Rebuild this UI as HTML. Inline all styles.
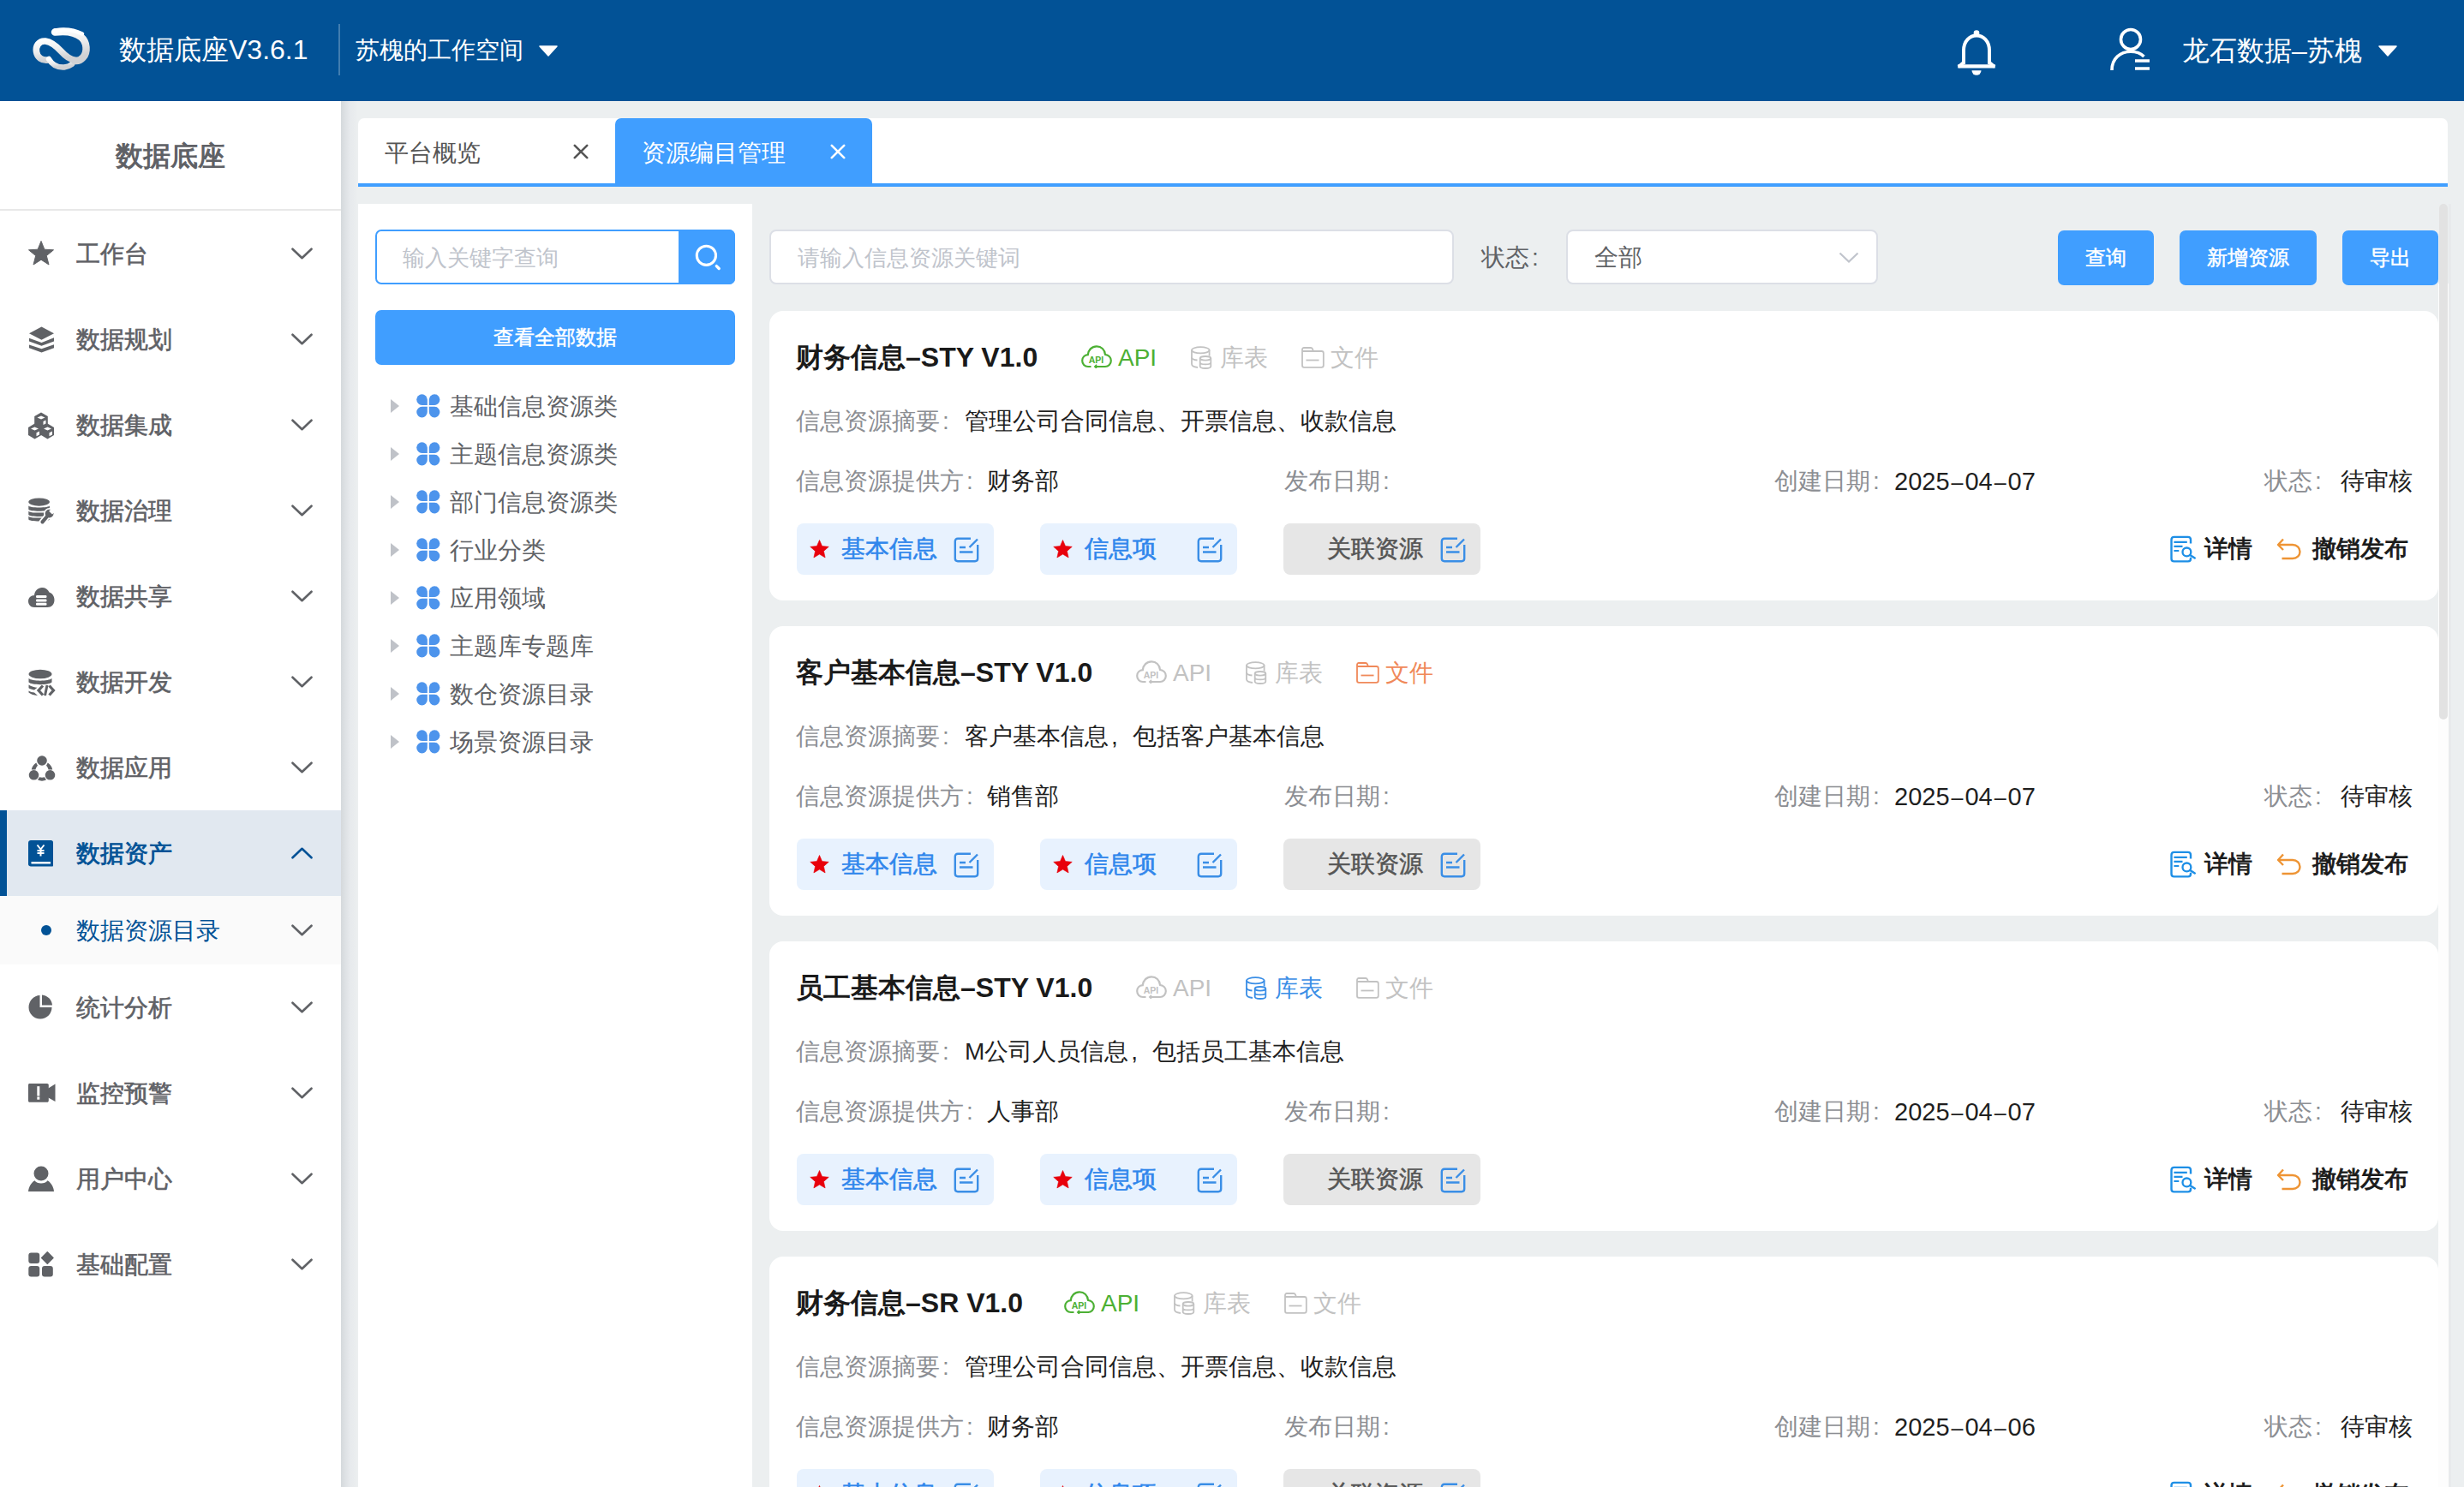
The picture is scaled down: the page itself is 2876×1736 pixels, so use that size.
<!DOCTYPE html>
<html><head><meta charset="utf-8"><style>
html,body{margin:0;padding:0;}
body{width:2876px;height:1736px;overflow:hidden;position:relative;background:#eceff0;font-family:"Liberation Sans", sans-serif;}
.ab{position:absolute;}
.t{position:absolute;white-space:nowrap;}
#hdr{position:absolute;left:0;top:0;width:2876px;height:118px;background:#025296;}
#side{position:absolute;left:0;top:118px;width:398px;height:1618px;background:#fff;}
</style></head><body>
<div id="hdr"></div><svg class="ab" style="left:30px;top:25px" width="85" height="65" viewBox="0 0 85 65">
<defs><linearGradient id="lg" x1="0" y1="0" x2="0.3" y2="1"><stop offset="0" stop-color="#ffffff"/><stop offset="0.55" stop-color="#ececed"/><stop offset="1" stop-color="#d0d1d4"/></linearGradient></defs>
<path d="M58 45.5 C50 44 46 40 42 35.5 C37 30 31 24 23 23 C15 22.5 11.5 29 12.5 35.5 C13.5 42 19 46 26 45" fill="none" stroke="url(#lg)" stroke-width="7.6" stroke-linecap="round"/>
<path d="M27 44 C31 51 37 54 45 53.5 C49 53 52 51.5 54 50" fill="none" stroke="url(#lg)" stroke-width="6.5" stroke-linecap="round"/>
<path d="M34 12.5 C46 11 58 12.5 65 18.5 C71.5 24 72.5 36 67 42 C64 45.5 61 46.5 57 46" fill="none" stroke="url(#lg)" stroke-width="8.5" stroke-linecap="round"/>
<path d="M34 10.5 C44 8.5 56 9.5 66 14.5" fill="none" stroke="#ffffff" stroke-width="4.5" stroke-linecap="round"/>
</svg><div class="t" style="left:139px;top:26.0px;height:64px;line-height:64px;font-size:32px;color:#fff;font-weight:normal;">数据底座V3.6.1</div><div class="ab" style="left:395px;top:28px;width:2px;height:60px;background:rgba(255,255,255,0.25)"></div><div class="t" style="left:415px;top:31.0px;height:56px;line-height:56px;font-size:28px;color:#fff;font-weight:normal;">苏槐的工作空间</div><svg class="ab" style="left:629px;top:53px" width="22" height="13" viewBox="0 0 22 13"><path d="M1 1 H21 L11 12 Z" fill="#fff" stroke="#fff" stroke-width="1.5" stroke-linejoin="round"/></svg><svg class="ab" style="left:2283px;top:33px" width="48" height="58" viewBox="0 0 48 58">
<path d="M9 42 V26 C9 15 16 8.5 24 8.5 C32 8.5 39 15 39 26 V42" fill="none" stroke="#fff" stroke-width="4"/>
<path d="M2.2 44.3 H45.8" stroke="#fff" stroke-width="4.2"/>
<path d="M9.5 39.5 L3 45 M38.5 39.5 L45 45" stroke="#fff" stroke-width="4"/>
<circle cx="24" cy="5.6" r="3.3" fill="#fff"/>
<path d="M18.5 49.3 H29.5 A5.5 5.5 0 0 1 18.5 49.3 Z" fill="#fff"/>
</svg><svg class="ab" style="left:2460px;top:31px" width="54" height="54" viewBox="0 0 54 54">
<circle cx="27" cy="15" r="11.5" fill="none" stroke="#fff" stroke-width="3.6"/>
<path d="M5 51 C5 37 15 29.3 27 29.3 C34 29.3 39 31.5 42.5 35" fill="none" stroke="#fff" stroke-width="3.6"/>
<path d="M32 40 H49 M32 49 H49" stroke="#fff" stroke-width="3.6"/>
</svg><div class="t" style="left:2547px;top:27.0px;height:64px;line-height:64px;font-size:32px;color:#fff;font-weight:normal;">龙石数据–苏槐</div><svg class="ab" style="left:2776px;top:53px" width="22" height="13" viewBox="0 0 22 13"><path d="M1 1 H21 L11 12 Z" fill="#fff" stroke="#fff" stroke-width="1.5" stroke-linejoin="round"/></svg><div id="side"></div><div class="ab" style="left:398px;top:118px;width:20px;height:1618px;background:linear-gradient(90deg,#d5d9dc,#e6e9ec 50%,#eceff0)"></div><div class="t" style="left:0;top:152px;width:398px;text-align:center;height:60px;line-height:60px;font-size:32px;color:#5f6166;font-weight:bold">数据底座</div><div class="ab" style="left:0;top:244px;width:398px;height:2px;background:#e8e8e8"></div><svg class="ab" style="left:33px;top:281px" width="32" height="32" viewBox="0 0 32 32"><path d="M15 0.5 L18.9 10.2 L29.5 10.8 L21.3 17.6 L24 28 L15 22.2 L6 28 L8.7 17.6 L0.5 10.8 L11.1 10.2 Z" fill="#606266" stroke="#606266" stroke-width="1" stroke-linejoin="round"/></svg><div class="t" style="left:89px;top:269.0px;height:56px;line-height:56px;font-size:28px;color:#5f6166;font-weight:normal;-webkit-text-stroke:0.6px #5f6166;">工作台</div><svg class="ab" style="left:340px;top:289px" width="25" height="14" viewBox="0 0 25 14"><path d="M1.5 1.7 L12.5 12.2 L23.5 1.7" fill="none" stroke="#606266" stroke-width="2.6" stroke-linecap="round" stroke-linejoin="round"/></svg><svg class="ab" style="left:33px;top:381px" width="32" height="32" viewBox="0 0 32 32"><path d="M15.5 0.5 L30 8.3 L15.5 15.8 L1 8.3 Z" fill="#606266"/><path d="M1 13.8 L15.5 19 L30 13.2 L30 17.6 L15.5 22.8 L1 17.6 Z" fill="#606266"/><path d="M1 21.5 L15.5 26.3 L30 21.3 L30 25.2 L15.5 30.6 L1 25.2 Z" fill="#606266"/></svg><div class="t" style="left:89px;top:369.0px;height:56px;line-height:56px;font-size:28px;color:#5f6166;font-weight:normal;-webkit-text-stroke:0.6px #5f6166;">数据规划</div><svg class="ab" style="left:340px;top:389px" width="25" height="14" viewBox="0 0 25 14"><path d="M1.5 1.7 L12.5 12.2 L23.5 1.7" fill="none" stroke="#606266" stroke-width="2.6" stroke-linecap="round" stroke-linejoin="round"/></svg><svg class="ab" style="left:33px;top:481px" width="32" height="32" viewBox="0 0 32 32"><g fill="#606266"><path d="M15 0.5 L22.8 5 V14.2 L15 18.7 L7.2 14.2 V5 Z"/><path d="M7.5 13.5 L15.3 18 V27 L7.5 31.5 L0 27 V18 Z"/><path d="M22.5 13.5 L30 18 V27 L22.5 31.5 L15 27 V18 Z"/></g><g fill="#fff"><path d="M15 4.5 L19.5 6.5 L15 8.5 L10.5 6.5 Z"/><path d="M20.5 9.5 V13.5 L17.5 15 V11 Z"/><path d="M7.5 17.5 L12 19.5 L7.5 21.5 L3 19.5 Z"/><path d="M13 22.5 V26.5 L9.5 28.3 V24.3 Z"/><path d="M22.5 17.5 L27 19.5 L22.5 21.5 L18 19.5 Z"/><path d="M28 22.5 V26.5 L24.5 28.3 V24.3 Z"/></g></svg><div class="t" style="left:89px;top:469.0px;height:56px;line-height:56px;font-size:28px;color:#5f6166;font-weight:normal;-webkit-text-stroke:0.6px #5f6166;">数据集成</div><svg class="ab" style="left:340px;top:489px" width="25" height="14" viewBox="0 0 25 14"><path d="M1.5 1.7 L12.5 12.2 L23.5 1.7" fill="none" stroke="#606266" stroke-width="2.6" stroke-linecap="round" stroke-linejoin="round"/></svg><svg class="ab" style="left:33px;top:581px" width="32" height="32" viewBox="0 0 32 32"><g fill="#606266"><ellipse cx="12.6" cy="5.1" rx="12.3" ry="4.6"/><path d="M0.3 9.3 C0.3 12.23 24.9 12.23 24.9 9.3 V13.6 C24.9 16.53 0.3 16.53 0.3 13.6 Z"/><path d="M0.3 15.4 C0.3 18.33 24.9 18.33 24.9 15.4 V19.7 C24.9 22.63 0.3 22.63 0.3 19.7 Z"/><path d="M0.3 21.4 C0.3 24.33 24.9 24.33 24.9 21.4 V25.2 C24.9 28.13 0.3 28.13 0.3 25.2 Z"/></g><path d="M16.5 28.3 L24 19.5" stroke="#fff" stroke-width="7.5" stroke-linecap="round"/><circle cx="24.6" cy="18.6" r="6.6" fill="#fff"/><path d="M16.5 28.3 L24 19.5" stroke="#606266" stroke-width="4.2" stroke-linecap="round"/><circle cx="24.6" cy="18.6" r="4.9" fill="#606266"/><path d="M27.6 12.2 L31.5 16.1 L28 19.6 L24.1 15.7 Z" fill="#fff"/></svg><div class="t" style="left:89px;top:569.0px;height:56px;line-height:56px;font-size:28px;color:#5f6166;font-weight:normal;-webkit-text-stroke:0.6px #5f6166;">数据治理</div><svg class="ab" style="left:340px;top:589px" width="25" height="14" viewBox="0 0 25 14"><path d="M1.5 1.7 L12.5 12.2 L23.5 1.7" fill="none" stroke="#606266" stroke-width="2.6" stroke-linecap="round" stroke-linejoin="round"/></svg><svg class="ab" style="left:33px;top:681px" width="32" height="32" viewBox="0 0 32 32"><path d="M7 28 C2.5 28 0 24.5 0 21 C0 17 3 14 7 14 C7.5 8.5 11.5 5 16 5 C20 5 23 7 24.5 10.5 C28 11.5 30.5 15 30.5 19.5 C30.5 24.5 27 28 22.5 28 Z" fill="#606266"/><g fill="#fff"><rect x="9" y="14" width="12.5" height="3" rx="1.2"/><rect x="9" y="18.5" width="12.5" height="3" rx="1.2"/><rect x="9" y="22.8" width="12.5" height="3" rx="1.2"/></g></svg><div class="t" style="left:89px;top:669.0px;height:56px;line-height:56px;font-size:28px;color:#5f6166;font-weight:normal;-webkit-text-stroke:0.6px #5f6166;">数据共享</div><svg class="ab" style="left:340px;top:689px" width="25" height="14" viewBox="0 0 25 14"><path d="M1.5 1.7 L12.5 12.2 L23.5 1.7" fill="none" stroke="#606266" stroke-width="2.6" stroke-linecap="round" stroke-linejoin="round"/></svg><svg class="ab" style="left:33px;top:781px" width="32" height="32" viewBox="0 0 32 32"><g fill="#606266"><ellipse cx="14" cy="6" rx="13.5" ry="5.2"/><path d="M0.5 11 C4 14.5 24 14.5 27.5 11 V15.5 C24 19 4 19 0.5 15.5 Z"/><path d="M0.5 18.5 C3 20.5 8 21.5 10.5 21.8 L7 24.5 C4 24 2 23.2 0.5 22.3 Z"/><path d="M0.5 25.5 C2 26.5 5 27.5 7 27.5 L11 31 C6 30.5 2 29 0.5 27.5 Z"/></g><path d="M17 19.5 L12 25 L17 30.5 M24.5 19.5 L29.5 25 L24.5 30.5" fill="none" stroke="#606266" stroke-width="3.2"/><path d="M22 19 L19.5 31" stroke="#606266" stroke-width="3"/></svg><div class="t" style="left:89px;top:769.0px;height:56px;line-height:56px;font-size:28px;color:#5f6166;font-weight:normal;-webkit-text-stroke:0.6px #5f6166;">数据开发</div><svg class="ab" style="left:340px;top:789px" width="25" height="14" viewBox="0 0 25 14"><path d="M1.5 1.7 L12.5 12.2 L23.5 1.7" fill="none" stroke="#606266" stroke-width="2.6" stroke-linecap="round" stroke-linejoin="round"/></svg><svg class="ab" style="left:33px;top:881px" width="32" height="32" viewBox="0 0 32 32"><g fill="#606266"><circle cx="16" cy="7" r="5.8"/><circle cx="6.5" cy="23.8" r="5.8"/><circle cx="25.5" cy="23.8" r="5.8"/><path d="M9.2 9.5 L11 12.8 C9.5 14.5 8.7 16.2 8.5 17.6 L3.8 17.6 C4.2 14.5 6 11.5 9.2 9.5 Z"/><path d="M22.8 9.5 L21 12.8 C22.5 14.5 23.3 16.2 23.5 17.6 L28.2 17.6 C27.8 14.5 26 11.5 22.8 9.5 Z"/><path d="M11 29.5 L13 26.2 C15 26.8 17 26.8 19 26.2 L21 29.5 C18 31 14 31 11 29.5 Z"/></g></svg><div class="t" style="left:89px;top:869.0px;height:56px;line-height:56px;font-size:28px;color:#5f6166;font-weight:normal;-webkit-text-stroke:0.6px #5f6166;">数据应用</div><svg class="ab" style="left:340px;top:889px" width="25" height="14" viewBox="0 0 25 14"><path d="M1.5 1.7 L12.5 12.2 L23.5 1.7" fill="none" stroke="#606266" stroke-width="2.6" stroke-linecap="round" stroke-linejoin="round"/></svg><div class="ab" style="left:0;top:946px;width:398px;height:100px;background:#e1e8f0"></div><div class="ab" style="left:0;top:946px;width:8px;height:100px;background:#025296"></div><svg class="ab" style="left:33px;top:981px" width="32" height="32" viewBox="0 0 32 32"><path d="M3 0 H26.5 C28 0 29 1 29 2.5 V29.5 C29 30.2 28.5 30.5 28 30.5 H3 C1.5 30.5 0 29.5 0 28 V3 C0 1.3 1.3 0 3 0 Z" fill="#025296"/><path d="M3.5 25 H26 V27.5 H3.5 Z" fill="#fff"/><path d="M10.5 5.5 L14.5 10.5 L18.5 5.5 M14.5 10.5 V18.5 M10.5 12 H18.5 M10.5 15 H18.5" fill="none" stroke="#fff" stroke-width="2"/></svg><div class="t" style="left:89px;top:969.0px;height:56px;line-height:56px;font-size:28px;color:#025296;font-weight:normal;-webkit-text-stroke:0.8px #025296;">数据资产</div><svg class="ab" style="left:340px;top:989px" width="25" height="14" viewBox="0 0 25 14"><path d="M1.5 12.3 L12.5 1.8 L23.5 12.3" fill="none" stroke="#025296" stroke-width="2.6" stroke-linecap="round" stroke-linejoin="round"/></svg><div class="ab" style="left:0;top:1046px;width:398px;height:80px;background:#fafafa"></div><div class="ab" style="left:48px;top:1080px;width:12px;height:12px;border-radius:50%;background:#025296"></div><div class="t" style="left:89px;top:1059.0px;height:56px;line-height:56px;font-size:28px;color:#025296;font-weight:normal;">数据资源目录</div><svg class="ab" style="left:340px;top:1079px" width="25" height="14" viewBox="0 0 25 14"><path d="M1.5 1.7 L12.5 12.2 L23.5 1.7" fill="none" stroke="#606266" stroke-width="2.6" stroke-linecap="round" stroke-linejoin="round"/></svg><svg class="ab" style="left:33px;top:1161px" width="34" height="32" viewBox="0 0 34 32"><path d="M13.5 1 V15 H27.5 C27.5 22.7 21.3 28.5 14 28.5 C6.5 28.5 0.5 22.5 0.5 15 C0.5 7.5 6.5 1 13.5 1 Z" fill="#606266"/><path d="M16 0.5 C22.5 1 27.5 6.3 28 12.5 H16 Z" fill="#606266"/></svg><div class="t" style="left:89px;top:1149.0px;height:56px;line-height:56px;font-size:28px;color:#5f6166;font-weight:normal;-webkit-text-stroke:0.6px #5f6166;">统计分析</div><svg class="ab" style="left:340px;top:1169px" width="25" height="14" viewBox="0 0 25 14"><path d="M1.5 1.7 L12.5 12.2 L23.5 1.7" fill="none" stroke="#606266" stroke-width="2.6" stroke-linecap="round" stroke-linejoin="round"/></svg><svg class="ab" style="left:33px;top:1265px" width="34" height="32" viewBox="0 0 34 32"><path d="M1.5 0 H22 C23 0 23.8 0.8 23.8 1.8 V20 C23.8 21 23 21.8 22 21.8 H1.5 C0.7 21.8 0 21.1 0 20.3 V1.5 C0 0.7 0.7 0 1.5 0 Z" fill="#606266"/><path d="M23 5.8 L31.5 0.6 V21 L23 16.3 Z" fill="#606266"/><rect x="10.3" y="3.2" width="3" height="11.3" fill="#fff"/><rect x="10.3" y="15.5" width="3" height="3.2" fill="#fff"/></svg><div class="t" style="left:89px;top:1249.0px;height:56px;line-height:56px;font-size:28px;color:#5f6166;font-weight:normal;-webkit-text-stroke:0.6px #5f6166;">监控预警</div><svg class="ab" style="left:340px;top:1269px" width="25" height="14" viewBox="0 0 25 14"><path d="M1.5 1.7 L12.5 12.2 L23.5 1.7" fill="none" stroke="#606266" stroke-width="2.6" stroke-linecap="round" stroke-linejoin="round"/></svg><svg class="ab" style="left:33px;top:1361px" width="34" height="32" viewBox="0 0 34 32"><circle cx="15" cy="9" r="8.5" fill="#606266"/><path d="M7.5 17.3 C9 19.5 12 20.5 15 20.5 C18 20.5 21 19.5 22.5 17.3 C27 20 29.5 25 30 30 H0 C0.5 25 3 20 7.5 17.3 Z" fill="#606266"/></svg><div class="t" style="left:89px;top:1349.0px;height:56px;line-height:56px;font-size:28px;color:#5f6166;font-weight:normal;-webkit-text-stroke:0.6px #5f6166;">用户中心</div><svg class="ab" style="left:340px;top:1369px" width="25" height="14" viewBox="0 0 25 14"><path d="M1.5 1.7 L12.5 12.2 L23.5 1.7" fill="none" stroke="#606266" stroke-width="2.6" stroke-linecap="round" stroke-linejoin="round"/></svg><svg class="ab" style="left:33px;top:1461px" width="34" height="32" viewBox="0 0 34 32"><g fill="#606266"><rect x="0.3" y="1.4" width="12.9" height="12.5" rx="3"/><rect x="0.3" y="16.9" width="12.9" height="12.7" rx="3"/><rect x="16" y="16.9" width="12.8" height="12.7" rx="3"/><path d="M22.3 0.8 L29 7.5 L22.3 14.2 L15.6 7.5 Z" stroke="#606266" stroke-width="1.4" stroke-linejoin="round"/></g></svg><div class="t" style="left:89px;top:1449.0px;height:56px;line-height:56px;font-size:28px;color:#5f6166;font-weight:normal;-webkit-text-stroke:0.6px #5f6166;">基础配置</div><svg class="ab" style="left:340px;top:1469px" width="25" height="14" viewBox="0 0 25 14"><path d="M1.5 1.7 L12.5 12.2 L23.5 1.7" fill="none" stroke="#606266" stroke-width="2.6" stroke-linecap="round" stroke-linejoin="round"/></svg><div class="ab" style="left:418px;top:138px;width:2439px;height:76px;background:#fff;border-radius:7px 7px 0 0"></div><div class="ab" style="left:718px;top:138px;width:300px;height:76px;background:#409eff;border-radius:7px 7px 0 0"></div><div class="ab" style="left:418px;top:214px;width:2439px;height:4px;background:#409eff"></div><div class="t" style="left:449px;top:151.0px;height:56px;line-height:56px;font-size:28px;color:#555;font-weight:normal;">平台概览</div><svg class="ab" style="left:669px;top:168px" width="18" height="18" viewBox="0 0 18 18"><path d="M1.8 1.8 L16.2 16.2 M16.2 1.8 L1.8 16.2" stroke="#555" stroke-width="2.6" stroke-linecap="round"/></svg><div class="t" style="left:749px;top:151.0px;height:56px;line-height:56px;font-size:28px;color:#fff;font-weight:normal;">资源编目管理</div><svg class="ab" style="left:969px;top:168px" width="18" height="18" viewBox="0 0 18 18"><path d="M1.8 1.8 L16.2 16.2 M16.2 1.8 L1.8 16.2" stroke="#fff" stroke-width="2.6" stroke-linecap="round"/></svg><div class="ab" style="left:418px;top:238px;width:460px;height:1498px;background:#fff"></div><div class="ab" style="left:438px;top:268px;width:420px;height:64px;box-sizing:border-box;border:2px solid #409eff;border-radius:7px;background:#fff"></div><div class="ab" style="left:792px;top:268px;width:66px;height:64px;background:#409eff;border-radius:0 7px 7px 0"></div><svg class="ab" style="left:810px;top:285px" width="32" height="32" viewBox="0 0 32 32"><circle cx="14.4" cy="13.3" r="11.1" fill="none" stroke="#fff" stroke-width="3.1"/><path d="M26.3 25.6 L29.2 28.5" stroke="#fff" stroke-width="3.4" stroke-linecap="round"/></svg><div class="t" style="left:470px;top:275.0px;height:52px;line-height:52px;font-size:26px;color:#c0c4cc;font-weight:normal;">输入关键字查询</div><div class="ab" style="left:438px;top:362px;width:420px;height:64px;background:#409eff;border-radius:7px"></div><div class="t" style="left:438px;top:364px;width:420px;text-align:center;height:60px;line-height:60px;font-size:24px;color:#fff;-webkit-text-stroke:0.5px #fff">查看全部数据</div><svg class="ab" style="left:455px;top:465px" width="12" height="18" viewBox="0 0 12 18"><path d="M1 1 L11 9 L1 17 Z" fill="#bfc2c8"/></svg><svg class="ab" style="left:486px;top:460px" width="28" height="28" viewBox="0 0 28 28"><g fill="#4d94ec"><path d="M6.5 0.3 A6.3 6.3 0 0 1 12.799999999999999 6.6 V12.9 H6.5 A6.3 6.3 0 0 1 0.2 6.6 A6.3 6.3 0 0 1 6.5 0.3 Z"/><path d="M21.1 0.3 A6.3 6.3 0 0 1 27.4 6.6 A6.3 6.3 0 0 1 21.1 12.9 H14.8 V6.6 A6.3 6.3 0 0 1 21.1 0.3 Z"/><path d="M6.5 14.8 H12.799999999999999 V21.1 A6.3 6.3 0 0 1 6.5 27.4 A6.3 6.3 0 0 1 0.2 21.1 A6.3 6.3 0 0 1 6.5 14.8 Z"/><path d="M21.1 14.8 A6.3 6.3 0 0 1 27.4 21.1 A6.3 6.3 0 0 1 21.1 27.4 A6.3 6.3 0 0 1 14.8 21.1 V14.8 H21.1 Z"/></g></svg><div class="t" style="left:525px;top:447.0px;height:56px;line-height:56px;font-size:28px;color:#606266;font-weight:normal;">基础信息资源类</div><svg class="ab" style="left:455px;top:521px" width="12" height="18" viewBox="0 0 12 18"><path d="M1 1 L11 9 L1 17 Z" fill="#bfc2c8"/></svg><svg class="ab" style="left:486px;top:516px" width="28" height="28" viewBox="0 0 28 28"><g fill="#4d94ec"><path d="M6.5 0.3 A6.3 6.3 0 0 1 12.799999999999999 6.6 V12.9 H6.5 A6.3 6.3 0 0 1 0.2 6.6 A6.3 6.3 0 0 1 6.5 0.3 Z"/><path d="M21.1 0.3 A6.3 6.3 0 0 1 27.4 6.6 A6.3 6.3 0 0 1 21.1 12.9 H14.8 V6.6 A6.3 6.3 0 0 1 21.1 0.3 Z"/><path d="M6.5 14.8 H12.799999999999999 V21.1 A6.3 6.3 0 0 1 6.5 27.4 A6.3 6.3 0 0 1 0.2 21.1 A6.3 6.3 0 0 1 6.5 14.8 Z"/><path d="M21.1 14.8 A6.3 6.3 0 0 1 27.4 21.1 A6.3 6.3 0 0 1 21.1 27.4 A6.3 6.3 0 0 1 14.8 21.1 V14.8 H21.1 Z"/></g></svg><div class="t" style="left:525px;top:503.0px;height:56px;line-height:56px;font-size:28px;color:#606266;font-weight:normal;">主题信息资源类</div><svg class="ab" style="left:455px;top:577px" width="12" height="18" viewBox="0 0 12 18"><path d="M1 1 L11 9 L1 17 Z" fill="#bfc2c8"/></svg><svg class="ab" style="left:486px;top:572px" width="28" height="28" viewBox="0 0 28 28"><g fill="#4d94ec"><path d="M6.5 0.3 A6.3 6.3 0 0 1 12.799999999999999 6.6 V12.9 H6.5 A6.3 6.3 0 0 1 0.2 6.6 A6.3 6.3 0 0 1 6.5 0.3 Z"/><path d="M21.1 0.3 A6.3 6.3 0 0 1 27.4 6.6 A6.3 6.3 0 0 1 21.1 12.9 H14.8 V6.6 A6.3 6.3 0 0 1 21.1 0.3 Z"/><path d="M6.5 14.8 H12.799999999999999 V21.1 A6.3 6.3 0 0 1 6.5 27.4 A6.3 6.3 0 0 1 0.2 21.1 A6.3 6.3 0 0 1 6.5 14.8 Z"/><path d="M21.1 14.8 A6.3 6.3 0 0 1 27.4 21.1 A6.3 6.3 0 0 1 21.1 27.4 A6.3 6.3 0 0 1 14.8 21.1 V14.8 H21.1 Z"/></g></svg><div class="t" style="left:525px;top:559.0px;height:56px;line-height:56px;font-size:28px;color:#606266;font-weight:normal;">部门信息资源类</div><svg class="ab" style="left:455px;top:633px" width="12" height="18" viewBox="0 0 12 18"><path d="M1 1 L11 9 L1 17 Z" fill="#bfc2c8"/></svg><svg class="ab" style="left:486px;top:628px" width="28" height="28" viewBox="0 0 28 28"><g fill="#4d94ec"><path d="M6.5 0.3 A6.3 6.3 0 0 1 12.799999999999999 6.6 V12.9 H6.5 A6.3 6.3 0 0 1 0.2 6.6 A6.3 6.3 0 0 1 6.5 0.3 Z"/><path d="M21.1 0.3 A6.3 6.3 0 0 1 27.4 6.6 A6.3 6.3 0 0 1 21.1 12.9 H14.8 V6.6 A6.3 6.3 0 0 1 21.1 0.3 Z"/><path d="M6.5 14.8 H12.799999999999999 V21.1 A6.3 6.3 0 0 1 6.5 27.4 A6.3 6.3 0 0 1 0.2 21.1 A6.3 6.3 0 0 1 6.5 14.8 Z"/><path d="M21.1 14.8 A6.3 6.3 0 0 1 27.4 21.1 A6.3 6.3 0 0 1 21.1 27.4 A6.3 6.3 0 0 1 14.8 21.1 V14.8 H21.1 Z"/></g></svg><div class="t" style="left:525px;top:615.0px;height:56px;line-height:56px;font-size:28px;color:#606266;font-weight:normal;">行业分类</div><svg class="ab" style="left:455px;top:689px" width="12" height="18" viewBox="0 0 12 18"><path d="M1 1 L11 9 L1 17 Z" fill="#bfc2c8"/></svg><svg class="ab" style="left:486px;top:684px" width="28" height="28" viewBox="0 0 28 28"><g fill="#4d94ec"><path d="M6.5 0.3 A6.3 6.3 0 0 1 12.799999999999999 6.6 V12.9 H6.5 A6.3 6.3 0 0 1 0.2 6.6 A6.3 6.3 0 0 1 6.5 0.3 Z"/><path d="M21.1 0.3 A6.3 6.3 0 0 1 27.4 6.6 A6.3 6.3 0 0 1 21.1 12.9 H14.8 V6.6 A6.3 6.3 0 0 1 21.1 0.3 Z"/><path d="M6.5 14.8 H12.799999999999999 V21.1 A6.3 6.3 0 0 1 6.5 27.4 A6.3 6.3 0 0 1 0.2 21.1 A6.3 6.3 0 0 1 6.5 14.8 Z"/><path d="M21.1 14.8 A6.3 6.3 0 0 1 27.4 21.1 A6.3 6.3 0 0 1 21.1 27.4 A6.3 6.3 0 0 1 14.8 21.1 V14.8 H21.1 Z"/></g></svg><div class="t" style="left:525px;top:671.0px;height:56px;line-height:56px;font-size:28px;color:#606266;font-weight:normal;">应用领域</div><svg class="ab" style="left:455px;top:745px" width="12" height="18" viewBox="0 0 12 18"><path d="M1 1 L11 9 L1 17 Z" fill="#bfc2c8"/></svg><svg class="ab" style="left:486px;top:740px" width="28" height="28" viewBox="0 0 28 28"><g fill="#4d94ec"><path d="M6.5 0.3 A6.3 6.3 0 0 1 12.799999999999999 6.6 V12.9 H6.5 A6.3 6.3 0 0 1 0.2 6.6 A6.3 6.3 0 0 1 6.5 0.3 Z"/><path d="M21.1 0.3 A6.3 6.3 0 0 1 27.4 6.6 A6.3 6.3 0 0 1 21.1 12.9 H14.8 V6.6 A6.3 6.3 0 0 1 21.1 0.3 Z"/><path d="M6.5 14.8 H12.799999999999999 V21.1 A6.3 6.3 0 0 1 6.5 27.4 A6.3 6.3 0 0 1 0.2 21.1 A6.3 6.3 0 0 1 6.5 14.8 Z"/><path d="M21.1 14.8 A6.3 6.3 0 0 1 27.4 21.1 A6.3 6.3 0 0 1 21.1 27.4 A6.3 6.3 0 0 1 14.8 21.1 V14.8 H21.1 Z"/></g></svg><div class="t" style="left:525px;top:727.0px;height:56px;line-height:56px;font-size:28px;color:#606266;font-weight:normal;">主题库专题库</div><svg class="ab" style="left:455px;top:801px" width="12" height="18" viewBox="0 0 12 18"><path d="M1 1 L11 9 L1 17 Z" fill="#bfc2c8"/></svg><svg class="ab" style="left:486px;top:796px" width="28" height="28" viewBox="0 0 28 28"><g fill="#4d94ec"><path d="M6.5 0.3 A6.3 6.3 0 0 1 12.799999999999999 6.6 V12.9 H6.5 A6.3 6.3 0 0 1 0.2 6.6 A6.3 6.3 0 0 1 6.5 0.3 Z"/><path d="M21.1 0.3 A6.3 6.3 0 0 1 27.4 6.6 A6.3 6.3 0 0 1 21.1 12.9 H14.8 V6.6 A6.3 6.3 0 0 1 21.1 0.3 Z"/><path d="M6.5 14.8 H12.799999999999999 V21.1 A6.3 6.3 0 0 1 6.5 27.4 A6.3 6.3 0 0 1 0.2 21.1 A6.3 6.3 0 0 1 6.5 14.8 Z"/><path d="M21.1 14.8 A6.3 6.3 0 0 1 27.4 21.1 A6.3 6.3 0 0 1 21.1 27.4 A6.3 6.3 0 0 1 14.8 21.1 V14.8 H21.1 Z"/></g></svg><div class="t" style="left:525px;top:783.0px;height:56px;line-height:56px;font-size:28px;color:#606266;font-weight:normal;">数仓资源目录</div><svg class="ab" style="left:455px;top:857px" width="12" height="18" viewBox="0 0 12 18"><path d="M1 1 L11 9 L1 17 Z" fill="#bfc2c8"/></svg><svg class="ab" style="left:486px;top:852px" width="28" height="28" viewBox="0 0 28 28"><g fill="#4d94ec"><path d="M6.5 0.3 A6.3 6.3 0 0 1 12.799999999999999 6.6 V12.9 H6.5 A6.3 6.3 0 0 1 0.2 6.6 A6.3 6.3 0 0 1 6.5 0.3 Z"/><path d="M21.1 0.3 A6.3 6.3 0 0 1 27.4 6.6 A6.3 6.3 0 0 1 21.1 12.9 H14.8 V6.6 A6.3 6.3 0 0 1 21.1 0.3 Z"/><path d="M6.5 14.8 H12.799999999999999 V21.1 A6.3 6.3 0 0 1 6.5 27.4 A6.3 6.3 0 0 1 0.2 21.1 A6.3 6.3 0 0 1 6.5 14.8 Z"/><path d="M21.1 14.8 A6.3 6.3 0 0 1 27.4 21.1 A6.3 6.3 0 0 1 21.1 27.4 A6.3 6.3 0 0 1 14.8 21.1 V14.8 H21.1 Z"/></g></svg><div class="t" style="left:525px;top:839.0px;height:56px;line-height:56px;font-size:28px;color:#606266;font-weight:normal;">场景资源目录</div><div class="ab" style="left:898px;top:268px;width:799px;height:64px;box-sizing:border-box;border:2px solid #dcdfe6;border-radius:8px;background:#fff"></div><div class="t" style="left:931px;top:275.0px;height:52px;line-height:52px;font-size:26px;color:#c0c4cc;font-weight:normal;">请输入信息资源关键词</div><div class="t" style="left:1729px;top:273.0px;height:56px;line-height:56px;font-size:28px;color:#606266;font-weight:normal;">状态<span style='margin-left:3px'>:</span></div><div class="ab" style="left:1828px;top:268px;width:364px;height:64px;box-sizing:border-box;border:2px solid #dcdfe6;border-radius:8px;background:#fff"></div><div class="t" style="left:1861px;top:273.0px;height:56px;line-height:56px;font-size:28px;color:#606266;font-weight:normal;">全部</div><svg class="ab" style="left:2146px;top:294px" width="24" height="13" viewBox="0 0 24 13"><path d="M1.5 1.5 L12 11.5 L22.5 1.5" fill="none" stroke="#c0c4cc" stroke-width="2.2"/></svg><div class="ab" style="left:2402px;top:269px;width:112px;height:64px;background:#409eff;border-radius:7px"></div><div class="t" style="left:2402px;top:271px;width:112px;text-align:center;height:60px;line-height:60px;font-size:24px;color:#fff;-webkit-text-stroke:0.5px #fff">查询</div><div class="ab" style="left:2544px;top:269px;width:160px;height:64px;background:#409eff;border-radius:7px"></div><div class="t" style="left:2544px;top:271px;width:160px;text-align:center;height:60px;line-height:60px;font-size:24px;color:#fff;-webkit-text-stroke:0.5px #fff">新增资源</div><div class="ab" style="left:2734px;top:269px;width:112px;height:64px;background:#409eff;border-radius:7px"></div><div class="t" style="left:2734px;top:271px;width:112px;text-align:center;height:60px;line-height:60px;font-size:24px;color:#fff;-webkit-text-stroke:0.5px #fff">导出</div><div class="ab" style="left:898px;top:363px;width:1948px;height:338px;background:#fff;border-radius:16px"></div><div class="t" style="left:929px;top:385.0px;height:64px;line-height:64px;font-size:32px;color:#1a1a1a;font-weight:bold;">财务信息–STY V1.0</div><svg class="ab" style="left:1262px;top:403px" width="36" height="27" viewBox="0 0 36 27"><path d="M11.5 25 H8 C4 25 1.2 22 1.2 18 C1.2 14.2 4 11.5 7.8 11.2 C8.2 5.5 12.5 1.3 18 1.3 C23.5 1.3 27.5 5.3 28 10.8 C32 11.3 34.8 14.3 34.8 18 C34.8 22 31.8 25 28 25 H16" fill="none" stroke="#4cb034" stroke-width="2.2"/><path d="M18 22.8 L15.8 25 L18 27" fill="none" stroke="#4cb034" stroke-width="1.6"/><text x="17.5" y="21" text-anchor="middle" font-family="Liberation Sans" font-weight="bold" font-size="10.5" fill="#4cb034">API</text></svg><div class="t" style="left:1305px;top:390.0px;height:56px;line-height:56px;font-size:28px;color:#4cb034;font-weight:normal;">API</div><svg class="ab" style="left:1390px;top:404px" width="25" height="27" viewBox="0 0 25 27"><ellipse cx="11.3" cy="4.8" rx="10.3" ry="3.6" fill="none" stroke="#c2c2c2" stroke-width="1.8"/><path d="M1 4.8 V21 C1 23.2 4 24.5 8 25" fill="none" stroke="#c2c2c2" stroke-width="1.8"/><path d="M21.6 4.8 V11.5" fill="none" stroke="#c2c2c2" stroke-width="1.8"/><path d="M1 13 C1 15 4 16.2 7.5 16.5" fill="none" stroke="#c2c2c2" stroke-width="1.8"/><ellipse cx="17" cy="14.3" rx="6.3" ry="2.3" fill="none" stroke="#c2c2c2" stroke-width="1.8"/><path d="M10.7 14.3 V23.5 C10.7 25 13.5 26 17 26 C20.5 26 23.3 25 23.3 23.5 V14.3 M10.7 19 C10.7 20.5 13.5 21.4 17 21.4 C20.5 21.4 23.3 20.5 23.3 19" fill="none" stroke="#c2c2c2" stroke-width="1.8"/></svg><div class="t" style="left:1424px;top:390.0px;height:56px;line-height:56px;font-size:28px;color:#c2c2c2;font-weight:normal;">库表</div><svg class="ab" style="left:1518px;top:405px" width="28" height="25" viewBox="0 0 28 25"><path d="M2 3 C2 1.8 2.8 1 4 1 H12 C13 1 13.5 1.5 14 2.5 L15 5 H24.5 C25.8 5 26.8 6 26.8 7.3 V21.5 C26.8 22.8 25.8 23.8 24.5 23.8 H4 C2.8 23.8 2 22.8 2 21.5 Z M2 5 H15" fill="none" stroke="#c2c2c2" stroke-width="1.8" stroke-linejoin="round"/><path d="M6.5 15.5 H21.5" stroke="#c2c2c2" stroke-width="1.8"/></svg><div class="t" style="left:1553px;top:390.0px;height:56px;line-height:56px;font-size:28px;color:#c2c2c2;font-weight:normal;">文件</div><div class="t" style="left:929px;top:464.0px;height:56px;line-height:56px;font-size:28px;color:#8c8e93;font-weight:normal;">信息资源摘要<span style='margin-left:3px'>:</span></div><div class="t" style="left:1126px;top:464.0px;height:56px;line-height:56px;font-size:28px;color:#1f1f1f;font-weight:normal;">管理公司合同信息、开票信息、收款信息</div><div class="t" style="left:929px;top:534.0px;height:56px;line-height:56px;font-size:28px;color:#8c8e93;font-weight:normal;">信息资源提供方<span style='margin-left:3px'>:</span></div><div class="t" style="left:1152px;top:534.0px;height:56px;line-height:56px;font-size:28px;color:#1f1f1f;font-weight:normal;">财务部</div><div class="t" style="left:1499px;top:534.0px;height:56px;line-height:56px;font-size:28px;color:#8c8e93;font-weight:normal;">发布日期<span style='margin-left:3px'>:</span></div><div class="t" style="left:2071px;top:534.0px;height:56px;line-height:56px;font-size:28px;color:#8c8e93;font-weight:normal;">创建日期<span style='margin-left:3px'>:</span></div><div class="t" style="left:2211px;top:533.0px;height:58px;line-height:58px;font-size:29px;color:#1f1f1f;font-weight:normal;">2025<span style='font-size:25px;margin:0 2px'>–</span>04<span style='font-size:25px;margin:0 2px'>–</span>07</div><div class="t" style="left:2643px;top:534.0px;height:56px;line-height:56px;font-size:28px;color:#8c8e93;font-weight:normal;">状态<span style='margin-left:3px'>:</span></div><div class="t" style="left:2732px;top:534.0px;height:56px;line-height:56px;font-size:28px;color:#1f1f1f;font-weight:normal;">待审核</div><div class="ab" style="left:930px;top:611px;width:230px;height:60px;background:#e8f2fe;border-radius:8px"></div><svg class="ab" style="left:945px;top:630px" width="23" height="22" viewBox="0 0 23 22"><path d="M11.50 0.50 L14.56 7.59 L22.25 8.31 L16.45 13.41 L18.14 20.94 L11.50 17.00 L4.86 20.94 L6.55 13.41 L0.75 8.31 L8.44 7.59 Z" fill="#e8000b" stroke="#e8000b" stroke-width="0.6" stroke-linejoin="round"/></svg><div class="t" style="left:982px;top:613.0px;height:56px;line-height:56px;font-size:28px;color:#2f86ec;font-weight:normal;-webkit-text-stroke:0.55px #2f86ec;">基本信息</div><svg class="ab" style="left:1113px;top:627px" width="30" height="30" viewBox="0 0 30 30"><path d="M20 1.8 H5 C3 1.8 1.8 3 1.8 5 V25 C1.8 27 3 28.2 5 28.2 H25 C27 28.2 28.2 27 28.2 25 V9" fill="none" stroke="#3a8ee6" stroke-width="2.4"/><path d="M7 12 H14 M7 17.5 H22.5 M18.5 12 L28 2.5" fill="none" stroke="#3a8ee6" stroke-width="2.4"/></svg><div class="ab" style="left:1214px;top:611px;width:230px;height:60px;background:#e8f2fe;border-radius:8px"></div><svg class="ab" style="left:1229px;top:630px" width="23" height="22" viewBox="0 0 23 22"><path d="M11.50 0.50 L14.56 7.59 L22.25 8.31 L16.45 13.41 L18.14 20.94 L11.50 17.00 L4.86 20.94 L6.55 13.41 L0.75 8.31 L8.44 7.59 Z" fill="#e8000b" stroke="#e8000b" stroke-width="0.6" stroke-linejoin="round"/></svg><div class="t" style="left:1266px;top:613.0px;height:56px;line-height:56px;font-size:28px;color:#2f86ec;font-weight:normal;-webkit-text-stroke:0.55px #2f86ec;">信息项</div><svg class="ab" style="left:1397px;top:627px" width="30" height="30" viewBox="0 0 30 30"><path d="M20 1.8 H5 C3 1.8 1.8 3 1.8 5 V25 C1.8 27 3 28.2 5 28.2 H25 C27 28.2 28.2 27 28.2 25 V9" fill="none" stroke="#3a8ee6" stroke-width="2.4"/><path d="M7 12 H14 M7 17.5 H22.5 M18.5 12 L28 2.5" fill="none" stroke="#3a8ee6" stroke-width="2.4"/></svg><div class="ab" style="left:1498px;top:611px;width:230px;height:60px;background:#e6e6e6;border-radius:8px"></div><div class="t" style="left:1549px;top:613.0px;height:56px;line-height:56px;font-size:28px;color:#555;font-weight:normal;-webkit-text-stroke:0.55px #555;">关联资源</div><svg class="ab" style="left:1681px;top:627px" width="30" height="30" viewBox="0 0 30 30"><path d="M20 1.8 H5 C3 1.8 1.8 3 1.8 5 V25 C1.8 27 3 28.2 5 28.2 H25 C27 28.2 28.2 27 28.2 25 V9" fill="none" stroke="#3a8ee6" stroke-width="2.4"/><path d="M7 12 H14 M7 17.5 H22.5 M18.5 12 L28 2.5" fill="none" stroke="#3a8ee6" stroke-width="2.4"/></svg><svg class="ab" style="left:2531px;top:624px" width="34" height="34" viewBox="0 0 34 34">
<path d="M26 10.5 V6 C26 4 24.8 2.9 22.9 2.9 H6.6 C4.7 2.9 3.5 4 3.5 6 V28.3 C3.5 30.2 4.7 31.4 6.6 31.4 H22.9 C24.8 31.4 26 30.2 26 28.3 V26.8" fill="none" stroke="#1e8fe6" stroke-width="2.4"/>
<path d="M6.4 8.8 H21.8 M6.4 13.8 H16.5 M6.4 19 H12.3" stroke="#1e8fe6" stroke-width="2.2"/>
<circle cx="21.4" cy="20.4" r="4.9" fill="none" stroke="#1e8fe6" stroke-width="2.3"/><path d="M25.2 23.9 L30.8 27.4" stroke="#1e8fe6" stroke-width="2.4" stroke-linecap="round"/></svg><div class="t" style="left:2573px;top:613.0px;height:56px;line-height:56px;font-size:28px;color:#1a1a1a;font-weight:normal;-webkit-text-stroke:0.9px #1a1a1a;">详情</div><svg class="ab" style="left:2657px;top:628px" width="30" height="26" viewBox="0 0 30 26">
<path d="M8 1.5 L2 8 L8 14" fill="none" stroke="#ee9434" stroke-width="2.4" stroke-linejoin="round"/>
<path d="M2.5 8 H19 C24 8 27.5 11.5 27.5 16 C27.5 20.5 24 24 19 24 H6.5" fill="none" stroke="#ee9434" stroke-width="2.4"/></svg><div class="t" style="left:2699px;top:613.0px;height:56px;line-height:56px;font-size:28px;color:#1a1a1a;font-weight:normal;-webkit-text-stroke:0.9px #1a1a1a;">撤销发布</div><div class="ab" style="left:898px;top:731px;width:1948px;height:338px;background:#fff;border-radius:16px"></div><div class="t" style="left:929px;top:753.0px;height:64px;line-height:64px;font-size:32px;color:#1a1a1a;font-weight:bold;">客户基本信息–STY V1.0</div><svg class="ab" style="left:1326px;top:771px" width="36" height="27" viewBox="0 0 36 27"><path d="M11.5 25 H8 C4 25 1.2 22 1.2 18 C1.2 14.2 4 11.5 7.8 11.2 C8.2 5.5 12.5 1.3 18 1.3 C23.5 1.3 27.5 5.3 28 10.8 C32 11.3 34.8 14.3 34.8 18 C34.8 22 31.8 25 28 25 H16" fill="none" stroke="#c2c2c2" stroke-width="2.2"/><path d="M18 22.8 L15.8 25 L18 27" fill="none" stroke="#c2c2c2" stroke-width="1.6"/><text x="17.5" y="21" text-anchor="middle" font-family="Liberation Sans" font-weight="bold" font-size="10.5" fill="#c2c2c2">API</text></svg><div class="t" style="left:1369px;top:758.0px;height:56px;line-height:56px;font-size:28px;color:#c2c2c2;font-weight:normal;">API</div><svg class="ab" style="left:1454px;top:772px" width="25" height="27" viewBox="0 0 25 27"><ellipse cx="11.3" cy="4.8" rx="10.3" ry="3.6" fill="none" stroke="#c2c2c2" stroke-width="1.8"/><path d="M1 4.8 V21 C1 23.2 4 24.5 8 25" fill="none" stroke="#c2c2c2" stroke-width="1.8"/><path d="M21.6 4.8 V11.5" fill="none" stroke="#c2c2c2" stroke-width="1.8"/><path d="M1 13 C1 15 4 16.2 7.5 16.5" fill="none" stroke="#c2c2c2" stroke-width="1.8"/><ellipse cx="17" cy="14.3" rx="6.3" ry="2.3" fill="none" stroke="#c2c2c2" stroke-width="1.8"/><path d="M10.7 14.3 V23.5 C10.7 25 13.5 26 17 26 C20.5 26 23.3 25 23.3 23.5 V14.3 M10.7 19 C10.7 20.5 13.5 21.4 17 21.4 C20.5 21.4 23.3 20.5 23.3 19" fill="none" stroke="#c2c2c2" stroke-width="1.8"/></svg><div class="t" style="left:1488px;top:758.0px;height:56px;line-height:56px;font-size:28px;color:#c2c2c2;font-weight:normal;">库表</div><svg class="ab" style="left:1582px;top:773px" width="28" height="25" viewBox="0 0 28 25"><path d="M2 3 C2 1.8 2.8 1 4 1 H12 C13 1 13.5 1.5 14 2.5 L15 5 H24.5 C25.8 5 26.8 6 26.8 7.3 V21.5 C26.8 22.8 25.8 23.8 24.5 23.8 H4 C2.8 23.8 2 22.8 2 21.5 Z M2 5 H15" fill="none" stroke="#f0895a" stroke-width="1.8" stroke-linejoin="round"/><path d="M6.5 15.5 H21.5" stroke="#f0895a" stroke-width="1.8"/></svg><div class="t" style="left:1617px;top:758.0px;height:56px;line-height:56px;font-size:28px;color:#f0895a;font-weight:normal;">文件</div><div class="t" style="left:929px;top:832.0px;height:56px;line-height:56px;font-size:28px;color:#8c8e93;font-weight:normal;">信息资源摘要<span style='margin-left:3px'>:</span></div><div class="t" style="left:1126px;top:832.0px;height:56px;line-height:56px;font-size:28px;color:#1f1f1f;font-weight:normal;">客户基本信息<span style='display:inline-block;width:28px;text-indent:3px'>,</span>包括客户基本信息</div><div class="t" style="left:929px;top:902.0px;height:56px;line-height:56px;font-size:28px;color:#8c8e93;font-weight:normal;">信息资源提供方<span style='margin-left:3px'>:</span></div><div class="t" style="left:1152px;top:902.0px;height:56px;line-height:56px;font-size:28px;color:#1f1f1f;font-weight:normal;">销售部</div><div class="t" style="left:1499px;top:902.0px;height:56px;line-height:56px;font-size:28px;color:#8c8e93;font-weight:normal;">发布日期<span style='margin-left:3px'>:</span></div><div class="t" style="left:2071px;top:902.0px;height:56px;line-height:56px;font-size:28px;color:#8c8e93;font-weight:normal;">创建日期<span style='margin-left:3px'>:</span></div><div class="t" style="left:2211px;top:901.0px;height:58px;line-height:58px;font-size:29px;color:#1f1f1f;font-weight:normal;">2025<span style='font-size:25px;margin:0 2px'>–</span>04<span style='font-size:25px;margin:0 2px'>–</span>07</div><div class="t" style="left:2643px;top:902.0px;height:56px;line-height:56px;font-size:28px;color:#8c8e93;font-weight:normal;">状态<span style='margin-left:3px'>:</span></div><div class="t" style="left:2732px;top:902.0px;height:56px;line-height:56px;font-size:28px;color:#1f1f1f;font-weight:normal;">待审核</div><div class="ab" style="left:930px;top:979px;width:230px;height:60px;background:#e8f2fe;border-radius:8px"></div><svg class="ab" style="left:945px;top:998px" width="23" height="22" viewBox="0 0 23 22"><path d="M11.50 0.50 L14.56 7.59 L22.25 8.31 L16.45 13.41 L18.14 20.94 L11.50 17.00 L4.86 20.94 L6.55 13.41 L0.75 8.31 L8.44 7.59 Z" fill="#e8000b" stroke="#e8000b" stroke-width="0.6" stroke-linejoin="round"/></svg><div class="t" style="left:982px;top:981.0px;height:56px;line-height:56px;font-size:28px;color:#2f86ec;font-weight:normal;-webkit-text-stroke:0.55px #2f86ec;">基本信息</div><svg class="ab" style="left:1113px;top:995px" width="30" height="30" viewBox="0 0 30 30"><path d="M20 1.8 H5 C3 1.8 1.8 3 1.8 5 V25 C1.8 27 3 28.2 5 28.2 H25 C27 28.2 28.2 27 28.2 25 V9" fill="none" stroke="#3a8ee6" stroke-width="2.4"/><path d="M7 12 H14 M7 17.5 H22.5 M18.5 12 L28 2.5" fill="none" stroke="#3a8ee6" stroke-width="2.4"/></svg><div class="ab" style="left:1214px;top:979px;width:230px;height:60px;background:#e8f2fe;border-radius:8px"></div><svg class="ab" style="left:1229px;top:998px" width="23" height="22" viewBox="0 0 23 22"><path d="M11.50 0.50 L14.56 7.59 L22.25 8.31 L16.45 13.41 L18.14 20.94 L11.50 17.00 L4.86 20.94 L6.55 13.41 L0.75 8.31 L8.44 7.59 Z" fill="#e8000b" stroke="#e8000b" stroke-width="0.6" stroke-linejoin="round"/></svg><div class="t" style="left:1266px;top:981.0px;height:56px;line-height:56px;font-size:28px;color:#2f86ec;font-weight:normal;-webkit-text-stroke:0.55px #2f86ec;">信息项</div><svg class="ab" style="left:1397px;top:995px" width="30" height="30" viewBox="0 0 30 30"><path d="M20 1.8 H5 C3 1.8 1.8 3 1.8 5 V25 C1.8 27 3 28.2 5 28.2 H25 C27 28.2 28.2 27 28.2 25 V9" fill="none" stroke="#3a8ee6" stroke-width="2.4"/><path d="M7 12 H14 M7 17.5 H22.5 M18.5 12 L28 2.5" fill="none" stroke="#3a8ee6" stroke-width="2.4"/></svg><div class="ab" style="left:1498px;top:979px;width:230px;height:60px;background:#e6e6e6;border-radius:8px"></div><div class="t" style="left:1549px;top:981.0px;height:56px;line-height:56px;font-size:28px;color:#555;font-weight:normal;-webkit-text-stroke:0.55px #555;">关联资源</div><svg class="ab" style="left:1681px;top:995px" width="30" height="30" viewBox="0 0 30 30"><path d="M20 1.8 H5 C3 1.8 1.8 3 1.8 5 V25 C1.8 27 3 28.2 5 28.2 H25 C27 28.2 28.2 27 28.2 25 V9" fill="none" stroke="#3a8ee6" stroke-width="2.4"/><path d="M7 12 H14 M7 17.5 H22.5 M18.5 12 L28 2.5" fill="none" stroke="#3a8ee6" stroke-width="2.4"/></svg><svg class="ab" style="left:2531px;top:992px" width="34" height="34" viewBox="0 0 34 34">
<path d="M26 10.5 V6 C26 4 24.8 2.9 22.9 2.9 H6.6 C4.7 2.9 3.5 4 3.5 6 V28.3 C3.5 30.2 4.7 31.4 6.6 31.4 H22.9 C24.8 31.4 26 30.2 26 28.3 V26.8" fill="none" stroke="#1e8fe6" stroke-width="2.4"/>
<path d="M6.4 8.8 H21.8 M6.4 13.8 H16.5 M6.4 19 H12.3" stroke="#1e8fe6" stroke-width="2.2"/>
<circle cx="21.4" cy="20.4" r="4.9" fill="none" stroke="#1e8fe6" stroke-width="2.3"/><path d="M25.2 23.9 L30.8 27.4" stroke="#1e8fe6" stroke-width="2.4" stroke-linecap="round"/></svg><div class="t" style="left:2573px;top:981.0px;height:56px;line-height:56px;font-size:28px;color:#1a1a1a;font-weight:normal;-webkit-text-stroke:0.9px #1a1a1a;">详情</div><svg class="ab" style="left:2657px;top:996px" width="30" height="26" viewBox="0 0 30 26">
<path d="M8 1.5 L2 8 L8 14" fill="none" stroke="#ee9434" stroke-width="2.4" stroke-linejoin="round"/>
<path d="M2.5 8 H19 C24 8 27.5 11.5 27.5 16 C27.5 20.5 24 24 19 24 H6.5" fill="none" stroke="#ee9434" stroke-width="2.4"/></svg><div class="t" style="left:2699px;top:981.0px;height:56px;line-height:56px;font-size:28px;color:#1a1a1a;font-weight:normal;-webkit-text-stroke:0.9px #1a1a1a;">撤销发布</div><div class="ab" style="left:898px;top:1099px;width:1948px;height:338px;background:#fff;border-radius:16px"></div><div class="t" style="left:929px;top:1121.0px;height:64px;line-height:64px;font-size:32px;color:#1a1a1a;font-weight:bold;">员工基本信息–STY V1.0</div><svg class="ab" style="left:1326px;top:1139px" width="36" height="27" viewBox="0 0 36 27"><path d="M11.5 25 H8 C4 25 1.2 22 1.2 18 C1.2 14.2 4 11.5 7.8 11.2 C8.2 5.5 12.5 1.3 18 1.3 C23.5 1.3 27.5 5.3 28 10.8 C32 11.3 34.8 14.3 34.8 18 C34.8 22 31.8 25 28 25 H16" fill="none" stroke="#c2c2c2" stroke-width="2.2"/><path d="M18 22.8 L15.8 25 L18 27" fill="none" stroke="#c2c2c2" stroke-width="1.6"/><text x="17.5" y="21" text-anchor="middle" font-family="Liberation Sans" font-weight="bold" font-size="10.5" fill="#c2c2c2">API</text></svg><div class="t" style="left:1369px;top:1126.0px;height:56px;line-height:56px;font-size:28px;color:#c2c2c2;font-weight:normal;">API</div><svg class="ab" style="left:1454px;top:1140px" width="25" height="27" viewBox="0 0 25 27"><ellipse cx="11.3" cy="4.8" rx="10.3" ry="3.6" fill="none" stroke="#3a8ee6" stroke-width="1.8"/><path d="M1 4.8 V21 C1 23.2 4 24.5 8 25" fill="none" stroke="#3a8ee6" stroke-width="1.8"/><path d="M21.6 4.8 V11.5" fill="none" stroke="#3a8ee6" stroke-width="1.8"/><path d="M1 13 C1 15 4 16.2 7.5 16.5" fill="none" stroke="#3a8ee6" stroke-width="1.8"/><ellipse cx="17" cy="14.3" rx="6.3" ry="2.3" fill="none" stroke="#3a8ee6" stroke-width="1.8"/><path d="M10.7 14.3 V23.5 C10.7 25 13.5 26 17 26 C20.5 26 23.3 25 23.3 23.5 V14.3 M10.7 19 C10.7 20.5 13.5 21.4 17 21.4 C20.5 21.4 23.3 20.5 23.3 19" fill="none" stroke="#3a8ee6" stroke-width="1.8"/></svg><div class="t" style="left:1488px;top:1126.0px;height:56px;line-height:56px;font-size:28px;color:#3a8ee6;font-weight:normal;">库表</div><svg class="ab" style="left:1582px;top:1141px" width="28" height="25" viewBox="0 0 28 25"><path d="M2 3 C2 1.8 2.8 1 4 1 H12 C13 1 13.5 1.5 14 2.5 L15 5 H24.5 C25.8 5 26.8 6 26.8 7.3 V21.5 C26.8 22.8 25.8 23.8 24.5 23.8 H4 C2.8 23.8 2 22.8 2 21.5 Z M2 5 H15" fill="none" stroke="#c2c2c2" stroke-width="1.8" stroke-linejoin="round"/><path d="M6.5 15.5 H21.5" stroke="#c2c2c2" stroke-width="1.8"/></svg><div class="t" style="left:1617px;top:1126.0px;height:56px;line-height:56px;font-size:28px;color:#c2c2c2;font-weight:normal;">文件</div><div class="t" style="left:929px;top:1200.0px;height:56px;line-height:56px;font-size:28px;color:#8c8e93;font-weight:normal;">信息资源摘要<span style='margin-left:3px'>:</span></div><div class="t" style="left:1126px;top:1200.0px;height:56px;line-height:56px;font-size:28px;color:#1f1f1f;font-weight:normal;">M公司人员信息<span style='display:inline-block;width:28px;text-indent:3px'>,</span>包括员工基本信息</div><div class="t" style="left:929px;top:1270.0px;height:56px;line-height:56px;font-size:28px;color:#8c8e93;font-weight:normal;">信息资源提供方<span style='margin-left:3px'>:</span></div><div class="t" style="left:1152px;top:1270.0px;height:56px;line-height:56px;font-size:28px;color:#1f1f1f;font-weight:normal;">人事部</div><div class="t" style="left:1499px;top:1270.0px;height:56px;line-height:56px;font-size:28px;color:#8c8e93;font-weight:normal;">发布日期<span style='margin-left:3px'>:</span></div><div class="t" style="left:2071px;top:1270.0px;height:56px;line-height:56px;font-size:28px;color:#8c8e93;font-weight:normal;">创建日期<span style='margin-left:3px'>:</span></div><div class="t" style="left:2211px;top:1269.0px;height:58px;line-height:58px;font-size:29px;color:#1f1f1f;font-weight:normal;">2025<span style='font-size:25px;margin:0 2px'>–</span>04<span style='font-size:25px;margin:0 2px'>–</span>07</div><div class="t" style="left:2643px;top:1270.0px;height:56px;line-height:56px;font-size:28px;color:#8c8e93;font-weight:normal;">状态<span style='margin-left:3px'>:</span></div><div class="t" style="left:2732px;top:1270.0px;height:56px;line-height:56px;font-size:28px;color:#1f1f1f;font-weight:normal;">待审核</div><div class="ab" style="left:930px;top:1347px;width:230px;height:60px;background:#e8f2fe;border-radius:8px"></div><svg class="ab" style="left:945px;top:1366px" width="23" height="22" viewBox="0 0 23 22"><path d="M11.50 0.50 L14.56 7.59 L22.25 8.31 L16.45 13.41 L18.14 20.94 L11.50 17.00 L4.86 20.94 L6.55 13.41 L0.75 8.31 L8.44 7.59 Z" fill="#e8000b" stroke="#e8000b" stroke-width="0.6" stroke-linejoin="round"/></svg><div class="t" style="left:982px;top:1349.0px;height:56px;line-height:56px;font-size:28px;color:#2f86ec;font-weight:normal;-webkit-text-stroke:0.55px #2f86ec;">基本信息</div><svg class="ab" style="left:1113px;top:1363px" width="30" height="30" viewBox="0 0 30 30"><path d="M20 1.8 H5 C3 1.8 1.8 3 1.8 5 V25 C1.8 27 3 28.2 5 28.2 H25 C27 28.2 28.2 27 28.2 25 V9" fill="none" stroke="#3a8ee6" stroke-width="2.4"/><path d="M7 12 H14 M7 17.5 H22.5 M18.5 12 L28 2.5" fill="none" stroke="#3a8ee6" stroke-width="2.4"/></svg><div class="ab" style="left:1214px;top:1347px;width:230px;height:60px;background:#e8f2fe;border-radius:8px"></div><svg class="ab" style="left:1229px;top:1366px" width="23" height="22" viewBox="0 0 23 22"><path d="M11.50 0.50 L14.56 7.59 L22.25 8.31 L16.45 13.41 L18.14 20.94 L11.50 17.00 L4.86 20.94 L6.55 13.41 L0.75 8.31 L8.44 7.59 Z" fill="#e8000b" stroke="#e8000b" stroke-width="0.6" stroke-linejoin="round"/></svg><div class="t" style="left:1266px;top:1349.0px;height:56px;line-height:56px;font-size:28px;color:#2f86ec;font-weight:normal;-webkit-text-stroke:0.55px #2f86ec;">信息项</div><svg class="ab" style="left:1397px;top:1363px" width="30" height="30" viewBox="0 0 30 30"><path d="M20 1.8 H5 C3 1.8 1.8 3 1.8 5 V25 C1.8 27 3 28.2 5 28.2 H25 C27 28.2 28.2 27 28.2 25 V9" fill="none" stroke="#3a8ee6" stroke-width="2.4"/><path d="M7 12 H14 M7 17.5 H22.5 M18.5 12 L28 2.5" fill="none" stroke="#3a8ee6" stroke-width="2.4"/></svg><div class="ab" style="left:1498px;top:1347px;width:230px;height:60px;background:#e6e6e6;border-radius:8px"></div><div class="t" style="left:1549px;top:1349.0px;height:56px;line-height:56px;font-size:28px;color:#555;font-weight:normal;-webkit-text-stroke:0.55px #555;">关联资源</div><svg class="ab" style="left:1681px;top:1363px" width="30" height="30" viewBox="0 0 30 30"><path d="M20 1.8 H5 C3 1.8 1.8 3 1.8 5 V25 C1.8 27 3 28.2 5 28.2 H25 C27 28.2 28.2 27 28.2 25 V9" fill="none" stroke="#3a8ee6" stroke-width="2.4"/><path d="M7 12 H14 M7 17.5 H22.5 M18.5 12 L28 2.5" fill="none" stroke="#3a8ee6" stroke-width="2.4"/></svg><svg class="ab" style="left:2531px;top:1360px" width="34" height="34" viewBox="0 0 34 34">
<path d="M26 10.5 V6 C26 4 24.8 2.9 22.9 2.9 H6.6 C4.7 2.9 3.5 4 3.5 6 V28.3 C3.5 30.2 4.7 31.4 6.6 31.4 H22.9 C24.8 31.4 26 30.2 26 28.3 V26.8" fill="none" stroke="#1e8fe6" stroke-width="2.4"/>
<path d="M6.4 8.8 H21.8 M6.4 13.8 H16.5 M6.4 19 H12.3" stroke="#1e8fe6" stroke-width="2.2"/>
<circle cx="21.4" cy="20.4" r="4.9" fill="none" stroke="#1e8fe6" stroke-width="2.3"/><path d="M25.2 23.9 L30.8 27.4" stroke="#1e8fe6" stroke-width="2.4" stroke-linecap="round"/></svg><div class="t" style="left:2573px;top:1349.0px;height:56px;line-height:56px;font-size:28px;color:#1a1a1a;font-weight:normal;-webkit-text-stroke:0.9px #1a1a1a;">详情</div><svg class="ab" style="left:2657px;top:1364px" width="30" height="26" viewBox="0 0 30 26">
<path d="M8 1.5 L2 8 L8 14" fill="none" stroke="#ee9434" stroke-width="2.4" stroke-linejoin="round"/>
<path d="M2.5 8 H19 C24 8 27.5 11.5 27.5 16 C27.5 20.5 24 24 19 24 H6.5" fill="none" stroke="#ee9434" stroke-width="2.4"/></svg><div class="t" style="left:2699px;top:1349.0px;height:56px;line-height:56px;font-size:28px;color:#1a1a1a;font-weight:normal;-webkit-text-stroke:0.9px #1a1a1a;">撤销发布</div><div class="ab" style="left:898px;top:1467px;width:1948px;height:338px;background:#fff;border-radius:16px"></div><div class="t" style="left:929px;top:1489.0px;height:64px;line-height:64px;font-size:32px;color:#1a1a1a;font-weight:bold;">财务信息–SR V1.0</div><svg class="ab" style="left:1242px;top:1507px" width="36" height="27" viewBox="0 0 36 27"><path d="M11.5 25 H8 C4 25 1.2 22 1.2 18 C1.2 14.2 4 11.5 7.8 11.2 C8.2 5.5 12.5 1.3 18 1.3 C23.5 1.3 27.5 5.3 28 10.8 C32 11.3 34.8 14.3 34.8 18 C34.8 22 31.8 25 28 25 H16" fill="none" stroke="#4cb034" stroke-width="2.2"/><path d="M18 22.8 L15.8 25 L18 27" fill="none" stroke="#4cb034" stroke-width="1.6"/><text x="17.5" y="21" text-anchor="middle" font-family="Liberation Sans" font-weight="bold" font-size="10.5" fill="#4cb034">API</text></svg><div class="t" style="left:1285px;top:1494.0px;height:56px;line-height:56px;font-size:28px;color:#4cb034;font-weight:normal;">API</div><svg class="ab" style="left:1370px;top:1508px" width="25" height="27" viewBox="0 0 25 27"><ellipse cx="11.3" cy="4.8" rx="10.3" ry="3.6" fill="none" stroke="#c2c2c2" stroke-width="1.8"/><path d="M1 4.8 V21 C1 23.2 4 24.5 8 25" fill="none" stroke="#c2c2c2" stroke-width="1.8"/><path d="M21.6 4.8 V11.5" fill="none" stroke="#c2c2c2" stroke-width="1.8"/><path d="M1 13 C1 15 4 16.2 7.5 16.5" fill="none" stroke="#c2c2c2" stroke-width="1.8"/><ellipse cx="17" cy="14.3" rx="6.3" ry="2.3" fill="none" stroke="#c2c2c2" stroke-width="1.8"/><path d="M10.7 14.3 V23.5 C10.7 25 13.5 26 17 26 C20.5 26 23.3 25 23.3 23.5 V14.3 M10.7 19 C10.7 20.5 13.5 21.4 17 21.4 C20.5 21.4 23.3 20.5 23.3 19" fill="none" stroke="#c2c2c2" stroke-width="1.8"/></svg><div class="t" style="left:1404px;top:1494.0px;height:56px;line-height:56px;font-size:28px;color:#c2c2c2;font-weight:normal;">库表</div><svg class="ab" style="left:1498px;top:1509px" width="28" height="25" viewBox="0 0 28 25"><path d="M2 3 C2 1.8 2.8 1 4 1 H12 C13 1 13.5 1.5 14 2.5 L15 5 H24.5 C25.8 5 26.8 6 26.8 7.3 V21.5 C26.8 22.8 25.8 23.8 24.5 23.8 H4 C2.8 23.8 2 22.8 2 21.5 Z M2 5 H15" fill="none" stroke="#c2c2c2" stroke-width="1.8" stroke-linejoin="round"/><path d="M6.5 15.5 H21.5" stroke="#c2c2c2" stroke-width="1.8"/></svg><div class="t" style="left:1533px;top:1494.0px;height:56px;line-height:56px;font-size:28px;color:#c2c2c2;font-weight:normal;">文件</div><div class="t" style="left:929px;top:1568.0px;height:56px;line-height:56px;font-size:28px;color:#8c8e93;font-weight:normal;">信息资源摘要<span style='margin-left:3px'>:</span></div><div class="t" style="left:1126px;top:1568.0px;height:56px;line-height:56px;font-size:28px;color:#1f1f1f;font-weight:normal;">管理公司合同信息、开票信息、收款信息</div><div class="t" style="left:929px;top:1638.0px;height:56px;line-height:56px;font-size:28px;color:#8c8e93;font-weight:normal;">信息资源提供方<span style='margin-left:3px'>:</span></div><div class="t" style="left:1152px;top:1638.0px;height:56px;line-height:56px;font-size:28px;color:#1f1f1f;font-weight:normal;">财务部</div><div class="t" style="left:1499px;top:1638.0px;height:56px;line-height:56px;font-size:28px;color:#8c8e93;font-weight:normal;">发布日期<span style='margin-left:3px'>:</span></div><div class="t" style="left:2071px;top:1638.0px;height:56px;line-height:56px;font-size:28px;color:#8c8e93;font-weight:normal;">创建日期<span style='margin-left:3px'>:</span></div><div class="t" style="left:2211px;top:1637.0px;height:58px;line-height:58px;font-size:29px;color:#1f1f1f;font-weight:normal;">2025<span style='font-size:25px;margin:0 2px'>–</span>04<span style='font-size:25px;margin:0 2px'>–</span>06</div><div class="t" style="left:2643px;top:1638.0px;height:56px;line-height:56px;font-size:28px;color:#8c8e93;font-weight:normal;">状态<span style='margin-left:3px'>:</span></div><div class="t" style="left:2732px;top:1638.0px;height:56px;line-height:56px;font-size:28px;color:#1f1f1f;font-weight:normal;">待审核</div><div class="ab" style="left:930px;top:1715px;width:230px;height:60px;background:#e8f2fe;border-radius:8px"></div><svg class="ab" style="left:945px;top:1734px" width="23" height="22" viewBox="0 0 23 22"><path d="M11.50 0.50 L14.56 7.59 L22.25 8.31 L16.45 13.41 L18.14 20.94 L11.50 17.00 L4.86 20.94 L6.55 13.41 L0.75 8.31 L8.44 7.59 Z" fill="#e8000b" stroke="#e8000b" stroke-width="0.6" stroke-linejoin="round"/></svg><div class="t" style="left:982px;top:1717.0px;height:56px;line-height:56px;font-size:28px;color:#2f86ec;font-weight:normal;-webkit-text-stroke:0.55px #2f86ec;">基本信息</div><svg class="ab" style="left:1113px;top:1731px" width="30" height="30" viewBox="0 0 30 30"><path d="M20 1.8 H5 C3 1.8 1.8 3 1.8 5 V25 C1.8 27 3 28.2 5 28.2 H25 C27 28.2 28.2 27 28.2 25 V9" fill="none" stroke="#3a8ee6" stroke-width="2.4"/><path d="M7 12 H14 M7 17.5 H22.5 M18.5 12 L28 2.5" fill="none" stroke="#3a8ee6" stroke-width="2.4"/></svg><div class="ab" style="left:1214px;top:1715px;width:230px;height:60px;background:#e8f2fe;border-radius:8px"></div><svg class="ab" style="left:1229px;top:1734px" width="23" height="22" viewBox="0 0 23 22"><path d="M11.50 0.50 L14.56 7.59 L22.25 8.31 L16.45 13.41 L18.14 20.94 L11.50 17.00 L4.86 20.94 L6.55 13.41 L0.75 8.31 L8.44 7.59 Z" fill="#e8000b" stroke="#e8000b" stroke-width="0.6" stroke-linejoin="round"/></svg><div class="t" style="left:1266px;top:1717.0px;height:56px;line-height:56px;font-size:28px;color:#2f86ec;font-weight:normal;-webkit-text-stroke:0.55px #2f86ec;">信息项</div><svg class="ab" style="left:1397px;top:1731px" width="30" height="30" viewBox="0 0 30 30"><path d="M20 1.8 H5 C3 1.8 1.8 3 1.8 5 V25 C1.8 27 3 28.2 5 28.2 H25 C27 28.2 28.2 27 28.2 25 V9" fill="none" stroke="#3a8ee6" stroke-width="2.4"/><path d="M7 12 H14 M7 17.5 H22.5 M18.5 12 L28 2.5" fill="none" stroke="#3a8ee6" stroke-width="2.4"/></svg><div class="ab" style="left:1498px;top:1715px;width:230px;height:60px;background:#e6e6e6;border-radius:8px"></div><div class="t" style="left:1549px;top:1717.0px;height:56px;line-height:56px;font-size:28px;color:#555;font-weight:normal;-webkit-text-stroke:0.55px #555;">关联资源</div><svg class="ab" style="left:1681px;top:1731px" width="30" height="30" viewBox="0 0 30 30"><path d="M20 1.8 H5 C3 1.8 1.8 3 1.8 5 V25 C1.8 27 3 28.2 5 28.2 H25 C27 28.2 28.2 27 28.2 25 V9" fill="none" stroke="#3a8ee6" stroke-width="2.4"/><path d="M7 12 H14 M7 17.5 H22.5 M18.5 12 L28 2.5" fill="none" stroke="#3a8ee6" stroke-width="2.4"/></svg><svg class="ab" style="left:2531px;top:1728px" width="34" height="34" viewBox="0 0 34 34">
<path d="M26 10.5 V6 C26 4 24.8 2.9 22.9 2.9 H6.6 C4.7 2.9 3.5 4 3.5 6 V28.3 C3.5 30.2 4.7 31.4 6.6 31.4 H22.9 C24.8 31.4 26 30.2 26 28.3 V26.8" fill="none" stroke="#1e8fe6" stroke-width="2.4"/>
<path d="M6.4 8.8 H21.8 M6.4 13.8 H16.5 M6.4 19 H12.3" stroke="#1e8fe6" stroke-width="2.2"/>
<circle cx="21.4" cy="20.4" r="4.9" fill="none" stroke="#1e8fe6" stroke-width="2.3"/><path d="M25.2 23.9 L30.8 27.4" stroke="#1e8fe6" stroke-width="2.4" stroke-linecap="round"/></svg><div class="t" style="left:2573px;top:1717.0px;height:56px;line-height:56px;font-size:28px;color:#1a1a1a;font-weight:normal;-webkit-text-stroke:0.9px #1a1a1a;">详情</div><svg class="ab" style="left:2657px;top:1732px" width="30" height="26" viewBox="0 0 30 26">
<path d="M8 1.5 L2 8 L8 14" fill="none" stroke="#ee9434" stroke-width="2.4" stroke-linejoin="round"/>
<path d="M2.5 8 H19 C24 8 27.5 11.5 27.5 16 C27.5 20.5 24 24 19 24 H6.5" fill="none" stroke="#ee9434" stroke-width="2.4"/></svg><div class="t" style="left:2699px;top:1717.0px;height:56px;line-height:56px;font-size:28px;color:#1a1a1a;font-weight:normal;-webkit-text-stroke:0.9px #1a1a1a;">撤销发布</div><div class="ab" style="left:2846px;top:331px;width:12px;height:1405px;background:#fdfdfd"></div><div class="ab" style="left:2858px;top:238px;width:3px;height:1498px;background:#e8eaec"></div><div class="ab" style="left:2847px;top:238px;width:10px;height:602px;background:#e2e2e2;border-radius:5px"></div>
</body></html>
